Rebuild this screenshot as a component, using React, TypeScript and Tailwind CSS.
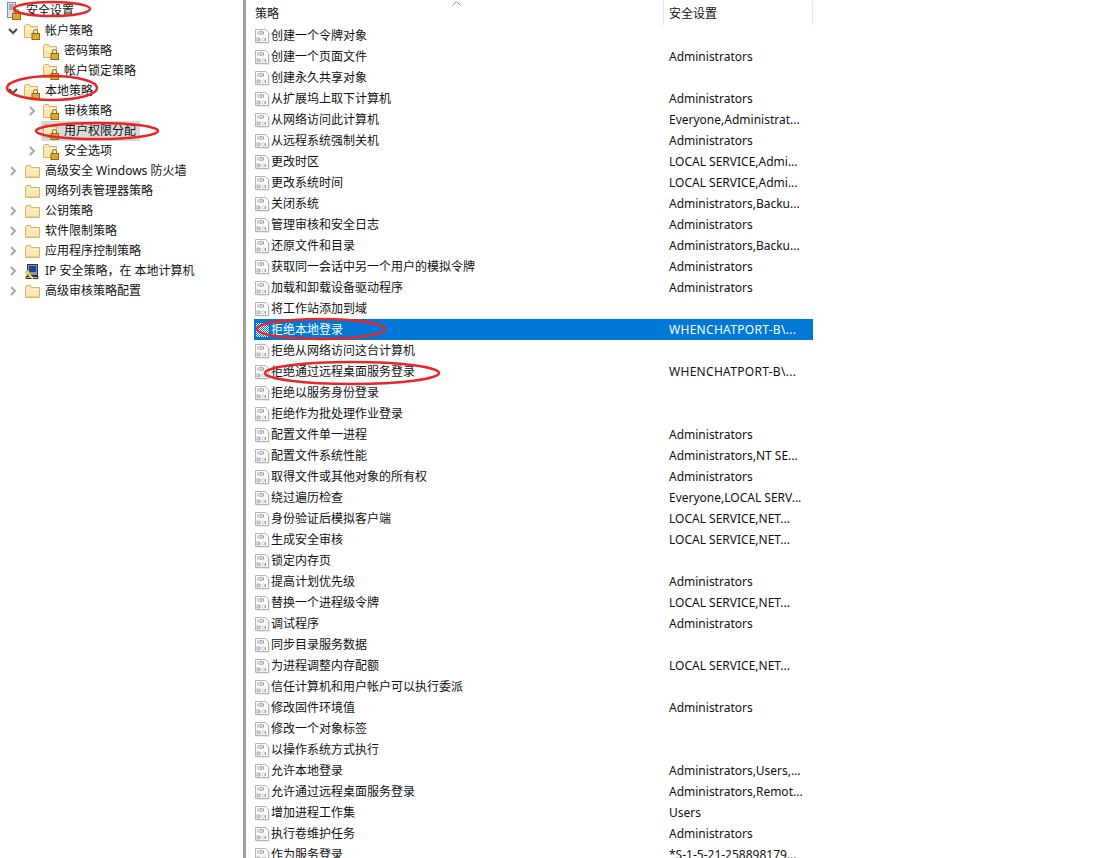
import React from 'react';

const FONT = "font-['Segoe_UI','Noto_Sans','Noto_Sans_CJK_SC',sans-serif]";

interface TreeItem {
  label: string;
  level: number;
  arrow?: 'open' | 'closed';
  icon: 'folder' | 'lock' | 'ipsec';
  selected?: boolean;
}

const treeItems: TreeItem[] = [
  { label: '帐户策略', level: 0, arrow: 'open', icon: 'lock' },
  { label: '密码策略', level: 1, icon: 'lock' },
  { label: '帐户锁定策略', level: 1, icon: 'lock' },
  { label: '本地策略', level: 0, arrow: 'open', icon: 'lock' },
  { label: '审核策略', level: 1, arrow: 'closed', icon: 'lock' },
  { label: '用户权限分配', level: 1, icon: 'lock', selected: true },
  { label: '安全选项', level: 1, arrow: 'closed', icon: 'lock' },
  { label: '高级安全 Windows 防火墙', level: 0, arrow: 'closed', icon: 'folder' },
  { label: '网络列表管理器策略', level: 0, icon: 'folder' },
  { label: '公钥策略', level: 0, arrow: 'closed', icon: 'folder' },
  { label: '软件限制策略', level: 0, arrow: 'closed', icon: 'folder' },
  { label: '应用程序控制策略', level: 0, arrow: 'closed', icon: 'folder' },
  { label: 'IP 安全策略，在 本地计算机', level: 0, arrow: 'closed', icon: 'ipsec' },
  { label: '高级审核策略配置', level: 0, arrow: 'closed', icon: 'folder' },
];

const policies: [string, string][] = [
  ['创建一个令牌对象', ''],
  ['创建一个页面文件', 'Administrators'],
  ['创建永久共享对象', ''],
  ['从扩展坞上取下计算机', 'Administrators'],
  ['从网络访问此计算机', 'Everyone,Administrat...'],
  ['从远程系统强制关机', 'Administrators'],
  ['更改时区', 'LOCAL SERVICE,Admi...'],
  ['更改系统时间', 'LOCAL SERVICE,Admi...'],
  ['关闭系统', 'Administrators,Backu...'],
  ['管理审核和安全日志', 'Administrators'],
  ['还原文件和目录', 'Administrators,Backu...'],
  ['获取同一会话中另一个用户的模拟令牌', 'Administrators'],
  ['加载和卸载设备驱动程序', 'Administrators'],
  ['将工作站添加到域', ''],
  ['拒绝本地登录', 'WHENCHATPORT-B\\...'],
  ['拒绝从网络访问这台计算机', ''],
  ['拒绝通过远程桌面服务登录', 'WHENCHATPORT-B\\...'],
  ['拒绝以服务身份登录', ''],
  ['拒绝作为批处理作业登录', ''],
  ['配置文件单一进程', 'Administrators'],
  ['配置文件系统性能', 'Administrators,NT SE...'],
  ['取得文件或其他对象的所有权', 'Administrators'],
  ['绕过遍历检查', 'Everyone,LOCAL SERV...'],
  ['身份验证后模拟客户端', 'LOCAL SERVICE,NET...'],
  ['生成安全审核', 'LOCAL SERVICE,NET...'],
  ['锁定内存页', ''],
  ['提高计划优先级', 'Administrators'],
  ['替换一个进程级令牌', 'LOCAL SERVICE,NET...'],
  ['调试程序', 'Administrators'],
  ['同步目录服务数据', ''],
  ['为进程调整内存配额', 'LOCAL SERVICE,NET...'],
  ['信任计算机和用户帐户可以执行委派', ''],
  ['修改固件环境值', 'Administrators'],
  ['修改一个对象标签', ''],
  ['以操作系统方式执行', ''],
  ['允许本地登录', 'Administrators,Users,...'],
  ['允许通过远程桌面服务登录', 'Administrators,Remot...'],
  ['增加进程工作集', 'Users'],
  ['执行卷维护任务', 'Administrators'],
  ['作为服务登录', '*S-1-5-21-258898179...'],
];

const ArrowOpen = () => (
  <svg width="10" height="7" viewBox="0 0 10 7" fill="none" stroke="#4a4a4a" strokeWidth="2" className="ml-px">
    <path d="M1 1L5 5L9 1" />
  </svg>
);

const ArrowClosed = () => (
  <svg width="7" height="10" viewBox="0 0 7 10" fill="none" stroke="#a8a8a8" strokeWidth="2" className="ml-[3px]">
    <path d="M1 1L5 5L1 9" />
  </svg>
);

const FolderIcon = () => (
  <svg width="15" height="15" viewBox="0 0 15 15" className="ml-px shrink-0">
    <path d="M0.5 2.5V13.5H14.5V3.5H6.5L5.5 1.5H1.5Z" fill="#f8e7ae" stroke="#d3b56c" />
    <path d="M1.5 5.5H13.5" stroke="#fff8e0" />
    <path d="M1.5 12.5H13.5" stroke="#edd48a" />
  </svg>
);

const LockFolderIcon = () => (
  <svg width="17" height="17" viewBox="0 0 17 17" className="shrink-0">
    <path d="M0.5 2.5V14.5H13.5V3.5H6.5L5.5 1.5H1.5Z" fill="#f8e7ae" stroke="#d3b56c" />
    <path d="M1.5 5.5H12.5" stroke="#fff8e0" />
    <path d="M9.5 10.5V8.5a2 2 0 0 1 4 0v2" fill="none" stroke="#7a6a3a" />
    <rect x="8" y="10.5" width="7.5" height="6" fill="#e3a92c" stroke="#8f6a14" />
  </svg>
);

const IpsecIcon = () => (
  <svg width="16" height="17" viewBox="0 0 16 17" className="shrink-0">
    <rect x="3.5" y="1.5" width="10" height="11" fill="#8d97a6" stroke="#333" />
    <rect x="5" y="3" width="7" height="6" fill="#1f3fa8" />
    <path d="M2 13.5H14V15.5H2Z" fill="#b9bdc4" stroke="#333" />
    <path d="M2 9L9 15.5" stroke="#f2e34c" strokeWidth="2" />
    <circle cx="3.5" cy="9.5" r="2" fill="#f2e34c" stroke="#a89a20" strokeWidth="0.5" />
  </svg>
);

const ServerLockIcon = () => (
  <svg width="20" height="18" viewBox="0 0 20 18" className="shrink-0">
    <rect x="1.5" y="0.5" width="8" height="15" fill="#dfe3e8" stroke="#8a8f96" />
    <path d="M3 3H8M3 5H8M3 7H8" stroke="#6d7278" />
    <path d="M8 12V10a2.5 2.5 0 0 1 5 0v2" fill="none" stroke="#7a6a3a" />
    <rect x="6.5" y="11.5" width="8" height="6" fill="#e3a92c" stroke="#8f6a14" />
  </svg>
);

const PolicyIcon = ({ selected }: { selected?: boolean }) => {
  if (selected) {
    return (
      <svg width="15" height="16" viewBox="0 0 15 16" className="shrink-0">
        <defs>
          <pattern id="dither" width="2" height="2" patternUnits="userSpaceOnUse">
            <rect width="2" height="2" fill="#0078d7" />
            <rect width="1" height="1" fill="#ffffff" />
            <rect x="1" y="1" width="1" height="1" fill="#ffffff" />
          </pattern>
        </defs>
        <path d="M1 1H11L14 4V15H1Z" fill="url(#dither)" />
      </svg>
    );
  }
  return (
    <svg width="15" height="16" viewBox="0 0 15 16" className="shrink-0">
      <path d="M2 2.5H12L14.5 5V15.5H2Z" fill="#d8d8d8" />
      <path d="M0.5 1.5H10.5L13.5 4.5V14.5H0.5Z" fill="#fbfbfb" stroke="#b4b4b4" />
      <path d="M3 3.5V6.5M8.5 3.5V6.5M5 10V13M10.5 10V13" stroke="#9a9a9a" />
      <rect x="5" y="3.5" width="2" height="3" fill="none" stroke="#9a9a9a" strokeWidth="0.8" />
      <rect x="2" y="10" width="2" height="3" fill="none" stroke="#9a9a9a" strokeWidth="0.8" />
      <rect x="7.5" y="10" width="2" height="3" fill="none" stroke="#c4c4c4" strokeWidth="0.6" />
    </svg>
  );
};

const TreeRow = ({ item }: { item: TreeItem }) => (
  <div className={`flex h-5 items-center ${item.level === 1 ? 'pl-[26px]' : 'pl-[7px]'}`}>
    <span className="flex w-[15px] shrink-0 items-center">
      {item.arrow === 'open' && <ArrowOpen />}
      {item.arrow === 'closed' && <ArrowClosed />}
    </span>
    <span className={`flex h-5 items-center pl-[2px] pr-[4px] ${item.selected ? 'bg-[#d9d9d9]' : ''}`}>
      <span className="flex w-[21px] shrink-0 items-center">
        {item.icon === 'lock' && <LockFolderIcon />}
        {item.icon === 'folder' && <FolderIcon />}
        {item.icon === 'ipsec' && <IpsecIcon />}
      </span>
      <span className="whitespace-nowrap">{item.label}</span>
    </span>
  </div>
);

const App: React.FC = () => {
  return (
    <div className={`relative flex h-[858px] w-[1118px] overflow-hidden bg-white text-xs text-[#111] ${FONT}`}>
      {/* left tree */}
      <div className="w-[243px] shrink-0 pt-px">
        <div className="flex h-5 items-center pl-[6px]">
          <ServerLockIcon />
          <span className="whitespace-nowrap">安全设置</span>
        </div>
        {treeItems.map((item) => (
          <TreeRow key={item.label} item={item} />
        ))}
      </div>

      <div className="w-[3px] shrink-0 bg-[#a0a0a0]" />

      {/* policy list */}
      <div className="w-[567px] shrink-0 pl-[8px]">
        <div className="flex h-[25px] items-end">
          <div className="h-[24px] w-[409px] pl-px leading-[25px]">策略</div>
          <div className="h-[24px] w-[150px] border-x border-[#e5e5e5] pl-[5px] leading-[25px]">安全设置</div>
        </div>
        {policies.map(([name, setting]) => {
          const selected = name === '拒绝本地登录';
          return (
            <div
              key={name}
              className={`flex h-[21px] items-center ${selected ? 'bg-[#0078d7] text-white' : ''}`}
            >
              <div className="flex w-[415px] shrink-0 items-center gap-[1px] pl-[1px]">
                <PolicyIcon selected={selected} />
                <span className="whitespace-nowrap">{name}</span>
              </div>
              <div className={`whitespace-nowrap ${setting.startsWith('WHEN') ? 'tracking-[0.3px]' : ''}`}>{setting}</div>
            </div>
          );
        })}
      </div>

      {/* hand-drawn red marks */}
      <svg className="pointer-events-none absolute left-0 top-0" width="1118" height="858" fill="none" stroke="#e8262a" strokeWidth="2.5">
        <ellipse cx="52" cy="9" rx="38" ry="7" />
        <ellipse cx="52" cy="88" rx="45" ry="12" />
        <ellipse cx="97" cy="131" rx="61" ry="8" />
        <ellipse cx="321" cy="329" rx="64" ry="10" />
        <ellipse cx="352" cy="373" rx="87" ry="11" />
      </svg>

      {/* sort arrow */}
      <svg className="absolute left-[452px] top-px" width="9" height="5" fill="none" stroke="#9a9a9a">
        <path d="M0.5 4.5L4.5 0.5L8.5 4.5" />
      </svg>
    </div>
  );
};

export default App;
